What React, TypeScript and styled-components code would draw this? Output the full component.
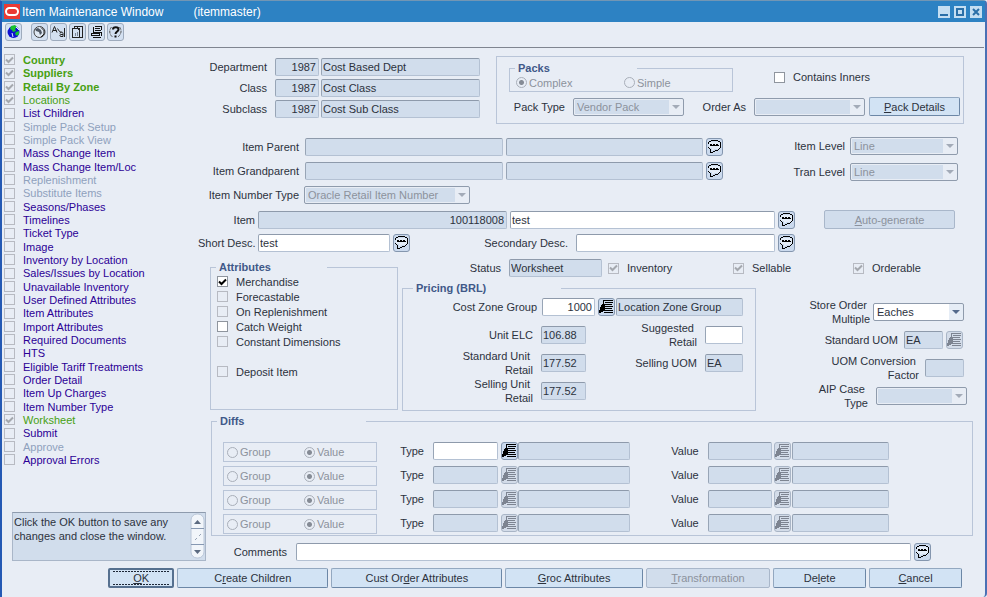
import React from "react";
import styled, { createGlobalStyle, css } from "styled-components";

const color = {
  page: "#e8edf5",
  field: "#d1ddec",
  ink: "#2c323d",
  muted: "#8c929c",
  line: "#b9c5d8",
  legend: "#405888",
};

const svgUrl = (body: string, w: number, h: number) =>
  `url("data:image/svg+xml,${encodeURIComponent(
    `<svg xmlns='http://www.w3.org/2000/svg' width='${w}' height='${h}' viewBox='0 0 ${w} ${h}'>${body}</svg>`
  )}")`;

const arrow = (fill: string) => svgUrl(`<path d='M0 0h8L4 4z' fill='${fill}'/>`, 8, 4);
const tick = (stroke: string) =>
  svgUrl(`<path d='M1 3.5l2.5 2.5L8 1.5' fill='none' stroke='${stroke}' stroke-width='2'/>`, 9, 8);

const GlobalStyle = createGlobalStyle`
  * { box-sizing: border-box; }
  body {
    margin: 0;
    background: ${color.page};
  }
  body, button, input, select, textarea {
    font-family: "Liberation Sans", Arial, sans-serif;
    font-size: 11px;
    line-height: 14px;
    color: ${color.ink};
  }
`;

/* ---------- window frame ---------- */

const Window = styled.div`
  min-height: 100vh;
  display: flex;
  flex-direction: column;
  background: ${color.page};
  border-left: 2px solid #2459b4;
  border-right: 2px solid #4a70b4;
  border-top: 1px solid #7296b4;
  border-radius: 0 4px 4px 0;
`;

const TitleBar = styled.header`
  display: flex;
  align-items: center;
  height: 21px;
  padding: 0 3px 0 2px;
  background: #2d82c3;
  color: #fff;
`;

const Title = styled.h1`
  margin: 0 0 0 2px;
  font-size: 12px;
  font-weight: normal;
  display: flex;
  gap: 30px;
  flex: 1;
`;

const WindowControls = styled.div`
  display: flex;
  gap: 4px;
`;

const WindowButton = styled.button`
  width: 12px;
  height: 12px;
  padding: 0;
  border: 0;
  display: block;
  background: #c4def2;
  svg { display: block; }
`;

const Toolbar = styled.nav`
  display: flex;
  align-items: flex-start;
  gap: 2px;
  height: 26px;
  margin: 0 1px 0 2px;
  padding: 1px 1px 0;
  border-bottom: 1px solid #7f8590;
`;

const ToolButton = styled.button<{ $apart?: boolean }>`
  width: 17px;
  height: 18px;
  padding: 0;
  margin-right: ${(p) => (p.$apart ? 7 : 0)}px;
  border: 1px solid #9eabbd;
  border-radius: 3px;
  background: #d3e0f1;
  svg { display: block; }
`;

const Body = styled.div`
  display: flex;
`;

/* ---------- side navigation ---------- */

const Sidebar = styled.aside`
  width: 196px;
  flex: none;
  display: flex;
  flex-direction: column;
  padding: 5px 0 0 2px;
`;

const NavList = styled.ul`
  list-style: none;
  margin: 0;
  padding: 0;
`;

const NavItem = styled.li`
  display: flex;
  align-items: center;
  gap: 8px;
  height: 13px;
  &:nth-child(3n + 2) { height: 14px; }
`;

type Tone = "done" | "open" | "off";
const toneColor: Record<Tone, string> = { done: "#47a012", open: "#2b0096", off: "#8fa1bd" };

const NavLink = styled.a<{ $tone: Tone; $bold?: boolean }>`
  color: ${(p) => toneColor[p.$tone]};
  font-weight: ${(p) => (p.$bold ? "bold" : "normal")};
  text-decoration: none;
  white-space: nowrap;
`;

const MessageBox = styled.div`
  display: flex;
  height: 49px;
  margin: auto -8px 0 8px;
  background: ${color.field};
  border: 1px solid #a9b6c8;
  border-top-color: #8e9bad;
`;

const MessageText = styled.textarea`
  flex: 1;
  min-width: 0;
  padding: 2px 1px;
  border: 0;
  outline: 0;
  resize: none;
  overflow: hidden;
  background: transparent;
  white-space: pre;
`;

/* ---------- form controls ---------- */

const Check = styled.input.attrs({ type: "checkbox" })`
  appearance: none;
  flex: none;
  width: 11px;
  height: 11px;
  margin: 0;
  border: 1px solid #8f959e;
  background: #fff center / 9px 8px no-repeat;
  &:checked { background-image: ${tick("#000")}; }
  &:disabled { border-color: #b7bac2; background-color: transparent; }
  &:disabled:checked { background-image: ${tick("#a4a8ae")}; }
`;

const CheckLabel = styled.label<{ $w?: number }>`
  display: flex;
  align-items: center;
  gap: 8px;
  height: 15px;
  white-space: nowrap;
  ${(p) => p.$w && css`width: ${p.$w}px;`}
`;

const Radio = styled.input.attrs({ type: "radio" })`
  appearance: none;
  flex: none;
  width: 11px;
  height: 11px;
  margin: 0;
  border: 1px solid #a9afb9;
  border-radius: 50%;
  &:checked { background: radial-gradient(circle, #858b95 2px, transparent 3px); }
`;

const RadioLabel = styled.label<{ $w: number }>`
  display: flex;
  align-items: center;
  gap: 2px;
  width: ${(p) => p.$w}px;
  color: ${color.muted};
`;

const Field = styled.input<{ $w?: number; $grow?: number }>`
  ${(p) => (p.$grow ? css`flex: ${p.$grow} 1 0;` : css`flex: none; width: ${p.$w}px;`)}
  min-width: 0;
  height: 18px;
  padding: 0 2px 0 1px;
  border: 1px solid #b4c1d3;
  border-top-color: #8e9aab;
  border-left-color: #98a5b6;
  border-radius: 2px;
  outline: 0;
  background: #fff;
  &:read-only { background: ${color.field}; }
`;

const NumberField = styled(Field)`
  text-align: right;
`;

const Select = styled.select<{ $w?: number; $grow?: number }>`
  appearance: none;
  ${(p) => (p.$grow ? css`flex: ${p.$grow} 1 0;` : css`flex: none; width: ${p.$w}px;`)}
  min-width: 0;
  height: 18px;
  padding: 0 18px 0 3px;
  border: 1px solid #8f9bac;
  border-radius: 2px;
  background:
    ${arrow("#546a8c")} right 3px center no-repeat,
    linear-gradient(#e6edf6, #e6edf6) right / 14px 100% no-repeat,
    #fff;
  &:disabled {
    opacity: 1;
    color: ${color.muted};
    background:
      ${arrow("#a3abb8")} right 3px center no-repeat,
      linear-gradient(${color.field}, ${color.field}) 1px 1px / calc(100% - 15px) calc(100% - 2px) no-repeat,
      ${color.page};
  }
`;

const Button = styled.button<{ $w?: number; $grow?: number; $focused?: boolean }>`
  ${(p) => (p.$grow ? css`flex: ${p.$grow} 1 0;` : css`flex: none; width: ${p.$w}px;`)}
  height: 19px;
  padding: 0;
  border: 1px solid #6c87a6;
  border-top-color: #93a8c0;
  border-left-color: #93a8c0;
  border-radius: 2px;
  background: #d2e3f4;
  white-space: nowrap;
  &:disabled {
    color: ${color.muted};
    border-color: #a9b7ca;
    background: ${color.field};
  }
  ${(p) =>
    p.$focused &&
    css`
      border: 2px solid #56708f;
      background-image:
        repeating-linear-gradient(90deg, #1c2636 0 2px, transparent 2px 3px),
        repeating-linear-gradient(90deg, #1c2636 0 2px, transparent 2px 3px);
      background-size: calc(100% - 6px) 1px;
      background-position: center 1px, center calc(100% - 1px);
      background-repeat: no-repeat;
    `}
`;

const IconButton = styled.button`
  flex: none;
  width: 17px;
  height: 18px;
  padding: 0;
  border: 1px solid #8496ae;
  border-radius: 3px;
  background: #cbdaee;
  color: #000;
  svg { display: block; }
  &:disabled {
    color: #7d8491;
    border-color: #a9b5c6;
    background: #d3dce9;
  }
`;

const Label = styled.label<{ $w?: number; $grow?: boolean }>`
  flex: ${(p) => (p.$grow ? "1" : "none")};
  ${(p) => p.$w && css`width: ${p.$w}px;`}
  text-align: right;
  white-space: pre;
`;

/* ---------- layout ---------- */

const Main = styled.main`
  flex: 1;
  min-width: 0;
  display: flex;
  flex-direction: column;
  padding: 8px 12px 0 0;
`;

const Row = styled.div<{ $gap?: number; $mr?: number; $mt?: number }>`
  display: flex;
  align-items: center;
  gap: ${(p) => p.$gap ?? 3}px;
  margin-right: ${(p) => p.$mr ?? 0}px;
  margin-top: ${(p) => p.$mt ?? 0}px;
`;

const TopRow = styled(Row)`
  align-items: flex-start;
`;

const Column = styled.div<{ $gap: number; $pt?: number; $grow?: boolean; $w?: number }>`
  display: flex;
  flex-direction: column;
  gap: ${(p) => p.$gap}px;
  padding-top: ${(p) => p.$pt ?? 0}px;
  ${(p) => p.$grow && css`flex: 1; min-width: 0;`}
  ${(p) => p.$w && css`flex: none; width: ${p.$w}px;`}
`;

const Space = styled.span<{ $w: number }>`
  flex: none;
  width: ${(p) => p.$w}px;
`;

const Panel = styled.section`
  flex: 1;
  min-width: 0;
  height: 68px;
  padding: 5px 3px 0 12px;
  border: 1px solid ${color.line};
`;

const Group = styled.fieldset`
  display: flex;
  flex-direction: column;
  min-width: 0;
  margin: 0;
  padding: 0;
  border: 1px solid ${color.line};
`;

const Legend = styled.legend<{ $w: number }>`
  width: ${(p) => p.$w}px;
  margin-left: 5px;
  padding: 0 0 0 3px;
  line-height: 12px;
  font-weight: bold;
  color: ${color.legend};
`;

const PackKind = styled(Group)`
  flex: none;
  width: 224px;
  height: 30px;
`;

const RadioRow = styled.div`
  display: flex;
  align-items: center;
  height: 17px;
  padding-left: 6px;
`;

const Attributes = styled(Group)`
  flex: none;
  width: 188px;
  height: 149px;
  margin: 2px 1px 0 12px;
`;

const AttributeList = styled.div`
  padding: 1px 6px 0;
`;

const AttributeGap = styled.div`
  height: 15px;
`;

const Pricing = styled(Group)`
  flex: 1;
  height: 129px;
  padding-right: 12px;
  > legend { margin-left: 10px; }
`;

const PriceGrid = styled.div`
  display: grid;
  grid-template-columns: 130px 45px 1fr 38px;
  grid-auto-rows: 28px;
  column-gap: 8px;
  align-items: center;
  margin-top: 5px;
`;

const Side = styled.div`
  flex: none;
  width: 214px;
  padding-top: 16px;
`;

const SideRow = styled.div<{ $mr: number; $gap: number }>`
  display: flex;
  align-items: center;
  justify-content: flex-end;
  height: 28px;
  gap: ${(p) => p.$gap}px;
  margin-right: ${(p) => p.$mr}px;
`;

const Diffs = styled(Group)`
  margin: 4px 0 0 13px;
  padding-bottom: 1px;
`;

const DiffRows = styled.div`
  display: flex;
  flex-direction: column;
  gap: 4px;
  padding: 15px 83px 0 11px;
`;

const DiffRow = styled.div`
  display: flex;
  align-items: flex-start;
`;

const DiffKind = styled.div`
  display: flex;
  align-items: center;
  flex: none;
  width: 154px;
  height: 20px;
  padding-left: 3px;
  border: 1px solid ${color.line};
`;

const DiffLabel = styled(Label)`
  line-height: 18px;
  margin-right: 9px;
`;

const Footer = styled.footer`
  display: flex;
  gap: 3px;
  padding: 7px 23px 8px 106px;
  button { height: 20px; }
`;

/* ---------- icons ---------- */

const CommentIcon = () => (
  <svg width="15" height="16" viewBox="0 0 15 16" shapeRendering="crispEdges">
    <path d="M3 3h9v1h1v5h-1v1H7v1H5v-2H3V9H2V4h1z" fill="#e4edf8" />
    <path
      d="M4 1h7v1H4zM2 2h2v1H2zM11 2h2v1h-2zM1 3h1v2H1zM13 3h1v6h-1zM1 8h1v1H1zM2 9h1v1H2zM3 10h1v4H3zM12 9h1v1h-1zM11 10h1v1h-1zM8 11h3v1H8zM6 12h2v1H6zM4 13h2v1H4z"
      fill="currentColor"
    />
    <path d="M3 5h2v2H3zM6 5h2v2H6zM9 5h2v2H9zM4 6h2v1H4zM7 6h2v1H7zM10 6h2v1h-2z" fill="currentColor" />
  </svg>
);

const ListIcon = () => (
  <svg width="15" height="16" viewBox="0 0 15 16" shapeRendering="crispEdges" fill="currentColor">
    <path d="M4 1h10v1H4zM6 3h8v1H6zM6 5h7v1H6zM6 7h8v1H6zM6 9h7v1H6zM6 11h8v1H6zM5 13h9v1H5zM4 1h1v5H4z" />
    <path d="M3 5h3v7H4v1H2v1H0v-3h1V8h1V6h1z" />
  </svg>
);

const OracleIcon = () => (
  <svg width="16" height="15" viewBox="0 0 16 15">
    <rect width="16" height="15" fill="#e93a34" />
    <rect x="2" y="4" width="12" height="7" rx="3.500" fill="none" stroke="#fff" strokeWidth="2" />
  </svg>
);

const GlobeIcon = () => (
  <svg width="15" height="16" viewBox="0 0 15 16">
    <circle cx="7.500" cy="8" r="6" fill="#1010d0" />
    <path d="M5 2l4-1 2 2-2 2 1 2-3 1-1-2-2-1zM10 8l3-1v3l-2 2-2-2zM7 2" fill="#17c22f" />
    <path d="M10 3l3 3M3 3L1.500 6M6 9l1 4" stroke="#dff0ff" />
  </svg>
);

const ClockIcon = () => (
  <svg width="15" height="16" viewBox="0 0 15 16">
    <circle cx="7.500" cy="8" r="5.500" fill="#dfe8f3" stroke="#444" />
    <path d="M3 5l3-1 3 2 1 3-2 2-1-3-3-1z" fill="#4f5864" />
    <path d="M9 3.500l3 3M12 6v4l-3 3" fill="none" stroke="#222" />
  </svg>
);

const TranslateIcon = () => (
  <svg width="15" height="16" viewBox="0 0 15 16" fill="none" stroke="#222">
    <path d="M1 8.500L3.500 2.500l2.500 6M2 6.500h3.500M6.500 4.500l2 3 2 1M9 9.500c0-2 3-2 3 0v3h-2c-1.500 0-1.500-2 0-2h2M13.500 4v9" />
  </svg>
);

const ReportIcon = () => (
  <svg width="15" height="16" viewBox="0 0 15 16" shapeRendering="crispEdges" fill="none" stroke="#222">
    <path d="M2.500 4.500h7v9h-7zM4.500 4.500v-2h8v11h-3M7.500 4.500v-2M9.500 6.500l-2-2" />
    <path d="M5.500 12V9M7.500 12V8" stroke="#7a8494" />
  </svg>
);

const PrintIcon = () => (
  <svg width="15" height="16" viewBox="0 0 15 16" fill="none" stroke="#111" shapeRendering="crispEdges">
    <path d="M5.500 2.500h7M4.500 2.500v6M12.500 2.500v3M6 4.500h5M6 6.500h6M4 8.500h8M2.500 9.500h8v2h-8zM12.500 8v4M4 13.500h8" />
  </svg>
);

const HelpIcon = () => (
  <svg width="15" height="16" viewBox="0 0 15 16" fill="none" stroke="#111">
    <path d="M3.500 3C1 6 1 10 4.500 13M11.500 3c2.500 3 2 7-1.500 10" stroke="#555" strokeDasharray="3 1" />
    <path d="M5 5.500C5 2.500 10.500 2.500 10.500 5.500 10.500 7.500 7.500 7.500 7.500 10" strokeWidth="2" />
    <path d="M6.500 12.500h2" strokeWidth="2" />
  </svg>
);

const ScrollIcon = () => (
  <svg width="15" height="47" viewBox="0 0 15 47">
    <rect x="1" y="1" width="13" height="44" rx="6" fill="#f1f5fa" stroke="#b9c6d8" />
    <path d="M1 15.500h13M1 31.500h13" stroke="#8698b2" />
    <path d="M4 11l3.500-4 3.500 4z" fill="#5b6a80" />
    <path d="M4 37l3.500 4 3.500-4z" fill="#5b6a80" />
    <path d="M5 27l2-2M9 23l2-2" stroke="#98a4b6" />
  </svg>
);

/* ---------- data ---------- */

type NavEntry = { text: string; tone: Tone; checked?: boolean; bold?: boolean };

const nav: NavEntry[] = [
  { text: "Country", tone: "done", checked: true, bold: true },
  { text: "Suppliers", tone: "done", checked: true, bold: true },
  { text: "Retail By Zone", tone: "done", checked: true, bold: true },
  { text: "Locations", tone: "done", checked: true },
  { text: "List Children", tone: "open" },
  { text: "Simple Pack Setup", tone: "off" },
  { text: "Simple Pack View", tone: "off" },
  { text: "Mass Change Item", tone: "open" },
  { text: "Mass Change Item/Loc", tone: "open" },
  { text: "Replenishment", tone: "off" },
  { text: "Substitute Items", tone: "off" },
  { text: "Seasons/Phases", tone: "open" },
  { text: "Timelines", tone: "open" },
  { text: "Ticket Type", tone: "open" },
  { text: "Image", tone: "open" },
  { text: "Inventory by Location", tone: "open" },
  { text: "Sales/Issues by Location", tone: "open" },
  { text: "Unavailable Inventory", tone: "open" },
  { text: "User Defined Attributes", tone: "open" },
  { text: "Item Attributes", tone: "open" },
  { text: "Import Attributes", tone: "open" },
  { text: "Required Documents", tone: "open" },
  { text: "HTS", tone: "open" },
  { text: "Eligible Tariff Treatments", tone: "open" },
  { text: "Order Detail", tone: "open" },
  { text: "Item Up Charges", tone: "open" },
  { text: "Item Number Type", tone: "open" },
  { text: "Worksheet", tone: "done", checked: true },
  { text: "Submit", tone: "open" },
  { text: "Approve", tone: "off" },
  { text: "Approval Errors", tone: "open" },
];

const hierarchy = [
  ["Department", "1987", "Cost Based Dept"],
  ["Class", "1987", "Cost Class"],
  ["Subclass", "1987", "Cost Sub Class"],
];

const attributes = [
  { text: "Merchandise", checked: true },
  { text: "Forecastable", off: true },
  { text: "On Replenishment", off: true },
  { text: "Catch Weight" },
  { text: "Constant Dimensions", off: true },
];

const tools = [
  { name: "Globe", icon: <GlobeIcon />, apart: true },
  { name: "Time zone", icon: <ClockIcon /> },
  { name: "Translate", icon: <TranslateIcon /> },
  { name: "Report", icon: <ReportIcon /> },
  { name: "Print", icon: <PrintIcon /> },
  { name: "Help", icon: <HelpIcon /> },
];

const CommentButton = ({ name }: { name: string }) => (
  <IconButton type="button" aria-label={`Edit ${name}`}>
    <CommentIcon />
  </IconButton>
);

const ListButton = ({ name, disabled }: { name: string; disabled?: boolean }) => (
  <IconButton type="button" aria-label={`List of ${name}`} disabled={disabled}>
    <ListIcon />
  </IconButton>
);

export default function App() {
  return (
    <>
      <GlobalStyle />
      <Window>
        <TitleBar>
          <OracleIcon />
          <Title>
            <span>Item Maintenance Window</span>
            <span>(itemmaster)</span>
          </Title>
          <WindowControls>
            <WindowButton aria-label="Minimize">
              <svg width="12" height="12"><path d="M2 9h8" stroke="#2a6fa8" strokeWidth="2" /></svg>
            </WindowButton>
            <WindowButton aria-label="Maximize">
              <svg width="12" height="12"><rect x="3" y="3" width="6" height="6" fill="none" stroke="#2a6fa8" strokeWidth="2" /></svg>
            </WindowButton>
            <WindowButton aria-label="Close">
              <svg width="12" height="12"><path d="M3 3l6 6M9 3l-6 6" stroke="#2a6fa8" strokeWidth="2" /></svg>
            </WindowButton>
          </WindowControls>
        </TitleBar>
        <Toolbar>
          {tools.map((t) => (
            <ToolButton key={t.name} aria-label={t.name} $apart={t.apart}>
              {t.icon}
            </ToolButton>
          ))}
        </Toolbar>

        <Body>
          <Sidebar>
            <NavList>
              {nav.map((n) => (
                <NavItem key={n.text}>
                  <Check aria-label={n.text} disabled checked={!!n.checked} readOnly />
                  <NavLink href="#" $tone={n.tone} $bold={n.bold}>{n.text}</NavLink>
                </NavItem>
              ))}
            </NavList>
            <MessageBox>
              <MessageText
                aria-label="Message"
                readOnly
                value={"Click the OK button to save any\nchanges and close the window."}
              />
              <ScrollIcon />
            </MessageBox>
          </Sidebar>

          <Main>
            <TopRow $gap={16} $mr={9}>
              <Column $gap={3} $pt={2} $w={282}>
                {hierarchy.map(([name, code, text]) => (
                  <Row key={name} $gap={2}>
                    <Label htmlFor={name} $w={69}>{name}</Label>
                    <Space $w={4} />
                    <NumberField id={name} $w={44} readOnly defaultValue={code} />
                    <Field aria-label={`${name} name`} $grow={1} readOnly defaultValue={text} />
                  </Row>
                ))}
              </Column>
              <Panel>
                <Row $gap={41}>
                  <PackKind>
                    <Legend $w={122}>Packs</Legend>
                    <RadioRow>
                      <RadioLabel $w={108}><Radio name="pack" disabled defaultChecked />Complex</RadioLabel>
                      <RadioLabel $w={90}><Radio name="pack" disabled />Simple</RadioLabel>
                    </RadioRow>
                  </PackKind>
                  <CheckLabel><Check />Contains Inners</CheckLabel>
                </Row>
                <Row $gap={4} $mt={5}>
                  <Label htmlFor="packType" $w={56}>Pack Type</Label>
                  <Space $w={0} />
                  <Select id="packType" $grow={1} disabled><option>Vendor Pack</option></Select>
                  <Label htmlFor="orderAs" $w={58}>Order As</Label>
                  <Space $w={0} />
                  <Select id="orderAs" $grow={1} disabled><option></option></Select>
                  <Button type="button" $w={91}><u>P</u>ack Details</Button>
                </Row>
              </Panel>
            </TopRow>

            <TopRow $gap={0} $mt={13} $mr={15}>
              <Column $gap={6} $pt={1} $grow>
                {["Item Parent", "Item Grandparent"].map((name) => (
                  <Row key={name}>
                    <Label htmlFor={name} $w={101}>{name}</Label>
                    <Space $w={0} />
                    <Field id={name} $grow={1} readOnly />
                    <Field aria-label={`${name} description`} $grow={1} readOnly />
                    <CommentButton name={name} />
                  </Row>
                ))}
                <Row $gap={5}>
                  <Label htmlFor="numberType" $w={101}>Item Number Type</Label>
                  <Select id="numberType" $w={166} disabled><option>Oracle Retail Item Number</option></Select>
                </Row>
              </Column>
              <Column $gap={8} $w={235}>
                {["Item Level", "Tran Level"].map((name) => (
                  <Row key={name} $gap={5}>
                    <Label htmlFor={name} $grow>{name}</Label>
                    <Select id={name} $w={108} disabled><option>Line</option></Select>
                  </Row>
                ))}
              </Column>
            </TopRow>

            <Row $mt={6} $mr={18}>
              <Label htmlFor="item" $w={57}>Item</Label>
              <NumberField id="item" $w={249} readOnly defaultValue="100118008" />
              <Field aria-label="Item description" $grow={1} defaultValue="test" />
              <CommentButton name="item description" />
              <Space $w={23} />
              <Button type="button" $w={131} disabled><u>A</u>uto-generate</Button>
            </Row>
            <Row $mt={5} $mr={178}>
              <Label htmlFor="shortDesc" $w={57}>Short Desc.</Label>
              <Field id="shortDesc" $w={132} defaultValue="test" />
              <CommentButton name="short description" />
              <Label htmlFor="secondDesc" $w={155}>Secondary Desc.</Label>
              <Space $w={2} />
              <Field id="secondDesc" $grow={1} />
              <CommentButton name="secondary description" />
            </Row>

            <TopRow $mt={7}>
              <Attributes>
                <Legend $w={111}>Attributes</Legend>
                <AttributeList>
                  {attributes.map((a) => (
                    <CheckLabel key={a.text}>
                      <Check disabled={a.off} defaultChecked={a.checked} />
                      {a.text}
                    </CheckLabel>
                  ))}
                  <AttributeGap />
                  <CheckLabel><Check disabled />Deposit Item</CheckLabel>
                </AttributeList>
              </Attributes>
              <Column $gap={5} $grow>
                <Row $gap={0}>
                  <Label htmlFor="status" $w={99}>Status</Label>
                  <Space $w={8} />
                  <Field id="status" $w={93} readOnly defaultValue="Worksheet" />
                  <Space $w={6} />
                  <CheckLabel $w={125}><Check disabled defaultChecked />Inventory</CheckLabel>
                  <CheckLabel $w={120}><Check disabled defaultChecked />Sellable</CheckLabel>
                  <CheckLabel><Check disabled defaultChecked />Orderable</CheckLabel>
                </Row>
                <TopRow>
                  <Pricing>
                    <Legend $w={148}>Pricing (BRL)</Legend>
                    <Row $mt={4} $gap={0}>
                      <Label htmlFor="zoneGroup" $w={134}>Cost Zone Group</Label>
                      <Space $w={5} />
                      <NumberField id="zoneGroup" $w={53} defaultValue="1000" />
                      <Space $w={3} />
                      <ListButton name="cost zone groups" />
                      <Space $w={1} />
                      <Field aria-label="Cost zone group name" $grow={1} readOnly defaultValue="Location Zone Group" />
                    </Row>
                    <PriceGrid>
                      <Label htmlFor="elc">Unit ELC</Label>
                      <Field id="elc" $w={45} readOnly defaultValue="106.88" />
                      <Label htmlFor="suggested">{"Suggested\u00a0\nRetail"}</Label>
                      <Field id="suggested" $w={38} />
                      <Label htmlFor="stdRetail">{"Standard Unit\u00a0\nRetail"}</Label>
                      <Field id="stdRetail" $w={45} readOnly defaultValue="177.52" />
                      <Label htmlFor="sellUom">Selling UOM</Label>
                      <Field id="sellUom" $w={38} readOnly defaultValue="EA" />
                      <Label htmlFor="sellRetail">{"Selling Unit\u00a0\nRetail"}</Label>
                      <Field id="sellRetail" $w={45} readOnly defaultValue="177.52" />
                    </PriceGrid>
                  </Pricing>
                  <Side>
                    <SideRow $mr={9} $gap={3}>
                      <Label htmlFor="multiple">{"Store Order\u00a0\nMultiple"}</Label>
                      <Select id="multiple" $w={91}><option>Eaches</option></Select>
                    </SideRow>
                    <SideRow $mr={10} $gap={3}>
                      <Label htmlFor="stdUom">Standard UOM</Label>
                      <Space $w={0} />
                      <Field id="stdUom" $w={39} readOnly defaultValue="EA" />
                      <ListButton name="units of measure" disabled />
                    </SideRow>
                    <SideRow $mr={9} $gap={6}>
                      <Label htmlFor="factor">{"UOM Conversion\u00a0\nFactor"}</Label>
                      <Field id="factor" $w={39} readOnly />
                    </SideRow>
                    <SideRow $mr={6} $gap={8}>
                      <Label htmlFor="caseType">{"AIP Case\u00a0\nType"}</Label>
                      <Select id="caseType" $w={91} disabled><option></option></Select>
                    </SideRow>
                  </Side>
                </TopRow>
              </Column>
            </TopRow>

            <Diffs>
              <Legend $w={149}>Diffs</Legend>
              <DiffRows>
                {[1, 2, 3, 4].map((n) => (
                  <DiffRow key={n}>
                    <DiffKind>
                      <RadioLabel $w={77}><Radio name={`diff${n}`} disabled />Group</RadioLabel>
                      <RadioLabel $w={60}><Radio name={`diff${n}`} disabled defaultChecked />Value</RadioLabel>
                    </DiffKind>
                    <DiffLabel htmlFor={`type${n}`} $w={47}>Type</DiffLabel>
                    <Field id={`type${n}`} $w={65} readOnly={n > 1} />
                    <Space $w={3} />
                    <ListButton name={`diff types ${n}`} disabled={n > 1} />
                    <Field aria-label={`Type ${n} name`} $grow={112} readOnly />
                    <DiffLabel htmlFor={`value${n}`} $w={69}>Value</DiffLabel>
                    <Field id={`value${n}`} $w={64} readOnly />
                    <Space $w={2} />
                    <ListButton name={`diff values ${n}`} disabled />
                    <Space $w={1} />
                    <Field aria-label={`Value ${n} name`} $grow={97} readOnly />
                  </DiffRow>
                ))}
              </DiffRows>
            </Diffs>

            <Row $mt={7} $mr={42}>
              <Label htmlFor="comments" $w={89}>Comments</Label>
              <Space $w={3} />
              <Field id="comments" $grow={1} />
              <CommentButton name="comments" />
            </Row>
          </Main>
        </Body>

        <Footer>
          <Button type="button" $grow={63} $focused><u>O</u>K</Button>
          <Button type="button" $grow={151}>C<u>r</u>eate Children</Button>
          <Button type="button" $grow={171}>Cust Or<u>d</u>er Attributes</Button>
          <Button type="button" $grow={137}><u>G</u>roc Attributes</Button>
          <Button type="button" $grow={124} disabled><u>T</u>ransformation</Button>
          <Button type="button" $grow={92}>De<u>l</u>ete</Button>
          <Button type="button" $grow={92}><u>C</u>ancel</Button>
        </Footer>
      </Window>
    </>
  );
}
